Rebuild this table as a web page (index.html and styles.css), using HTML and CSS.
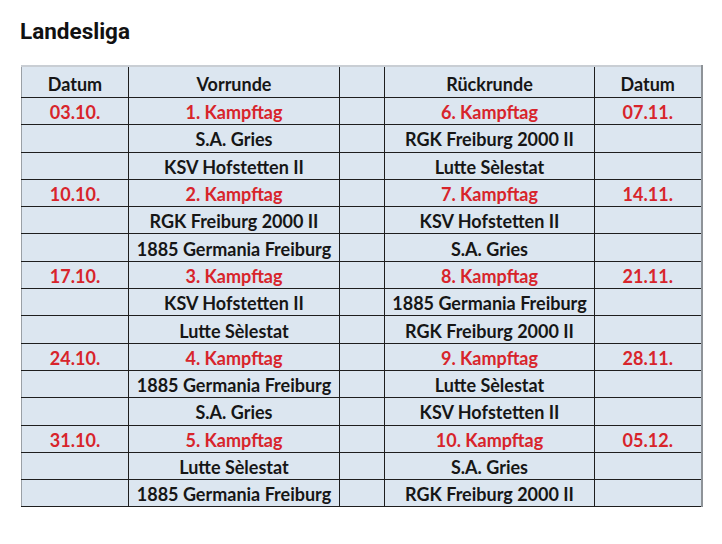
FILE: index.html
```html
<!DOCTYPE html>
<html lang="de">
<head>
<meta charset="utf-8">
<title>Landesliga</title>
<link rel="stylesheet" href="styles.css">
</head>
<body>
<h1 class="title">Landesliga</h1>
<table class="plan">
  <colgroup>
    <col class="c-date"><col class="c-team"><col class="c-gap"><col class="c-team2"><col class="c-date2">
  </colgroup>
  <thead>
    <tr><th>Datum</th><th>Vorrunde</th><th></th><th>Rückrunde</th><th>Datum</th></tr>
  </thead>
  <tbody>
    <tr class="day"><td>03.10.</td><td>1. Kampftag</td><td></td><td>6. Kampftag</td><td>07.11.</td></tr>
    <tr><td></td><td>S.A. Gries</td><td></td><td>RGK Freiburg 2000 II</td><td></td></tr>
    <tr><td></td><td>KSV Hofstetten II</td><td></td><td>Lutte Sèlestat</td><td></td></tr>
    <tr class="day"><td>10.10.</td><td>2. Kampftag</td><td></td><td>7. Kampftag</td><td>14.11.</td></tr>
    <tr><td></td><td>RGK Freiburg 2000 II</td><td></td><td>KSV Hofstetten II</td><td></td></tr>
    <tr><td></td><td>1885 Germania Freiburg</td><td></td><td>S.A. Gries</td><td></td></tr>
    <tr class="day"><td>17.10.</td><td>3. Kampftag</td><td></td><td>8. Kampftag</td><td>21.11.</td></tr>
    <tr><td></td><td>KSV Hofstetten II</td><td></td><td>1885 Germania Freiburg</td><td></td></tr>
    <tr><td></td><td>Lutte Sèlestat</td><td></td><td>RGK Freiburg 2000 II</td><td></td></tr>
    <tr class="day"><td>24.10.</td><td>4. Kampftag</td><td></td><td>9. Kampftag</td><td>28.11.</td></tr>
    <tr><td></td><td>1885 Germania Freiburg</td><td></td><td>Lutte Sèlestat</td><td></td></tr>
    <tr><td></td><td>S.A. Gries</td><td></td><td>KSV Hofstetten II</td><td></td></tr>
    <tr class="day"><td>31.10.</td><td>5. Kampftag</td><td></td><td>10. Kampftag</td><td>05.12.</td></tr>
    <tr><td></td><td>Lutte Sèlestat</td><td></td><td>S.A. Gries</td><td></td></tr>
    <tr><td></td><td>1885 Germania Freiburg</td><td></td><td>RGK Freiburg 2000 II</td><td></td></tr>
  </tbody>
</table>
</body>
</html>
```
FILE: styles.css
```css
html, body {
  margin: 0;
  padding: 0;
  background: #ffffff;
}
body {
  padding: 0 21px 0 21px;
}
.title {
  margin: 0 0 0 -1px;
  padding-top: 18px;
  height: 65px;
  box-sizing: border-box;
  font-family: Roboto, "Liberation Sans", sans-serif;
  font-weight: 700;
  font-size: 22.5px;
  line-height: 26px;
  color: #111111;
}
.plan {
  border-collapse: collapse;
  table-layout: fixed;
  width: 680px;
  font-family: Lato, "Liberation Sans", sans-serif;
  font-weight: 700;
  font-size: 18px;
  color: #161616;
  background: #dce6f0;
  border-top: 2px solid #c9ced4;
  border-left: 1px solid #9aa0a6;
  border-right: 2px solid #8e9398;
  border-bottom: 1px solid #333;
}
.c-date { width: 107px; }
.c-team { width: 211px; }
.c-gap { width: 45px; }
.c-team2 { width: 210px; }
.c-date2 { width: 107px; }
.plan th, .plan td {
  border: 1px solid #1e1e1e;
  padding: 0;
  text-align: center;
  vertical-align: middle;
  white-space: nowrap;
}
.plan thead th {
  border-top: 2px solid #c9ced4;
  font-weight: 700;
  height: 26px;
  padding-top: 4px;
}
.plan thead th:first-child { border-left: 1px solid #9aa0a6; }
.plan thead th:last-child { border-right: 2px solid #8e9398; }
.plan td:first-child { border-left: 1px solid #9aa0a6; }
.plan td:last-child { border-right: 2px solid #8e9398; }
.plan tbody td {
  height: 24.3px;
  padding-top: 2px;
}
.plan tr.day td {
  color: #d8242b;
}
```
